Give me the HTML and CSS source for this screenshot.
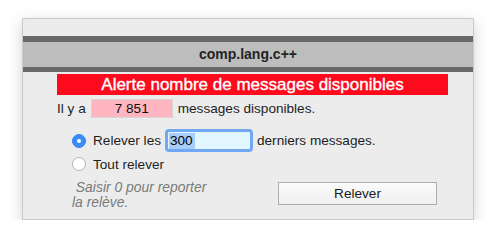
FILE: index.html
```html
<!DOCTYPE html>
<html lang="fr">
<head>
<meta charset="utf-8">
<link rel="stylesheet" href="styles.css">
</head>
<body>
<div class="window">
  <div class="titlebar"><div class="title">comp.lang.c++</div></div>
  <div class="alert">Alerte nombre de messages disponibles</div>
  <div class="count-row"><span>Il y a</span><span class="count">7 851</span><span>messages disponibles.</span></div>
  <div class="options">
    <div class="opt opt-first"><span class="radio on"></span><span>Relever les</span><span class="input"><span class="sel">300</span></span><span>derniers messages.</span></div>
    <div class="opt opt-second"><span class="radio"></span><span>Tout relever</span></div>
  </div>
  <div class="footer">
    <div class="hint">&nbsp;Saisir 0 pour reporter<br>la relève.</div>
    <button class="btn">Relever</button>
  </div>
</div>
</body>
</html>
```
FILE: styles.css
```css
* { box-sizing: border-box; }
html, body { margin: 0; padding: 0; background: #ffffff; }
body {
  font-family: "Liberation Sans", Arial, sans-serif;
  font-size: 13.6px;
  color: #1e1e1e;
  padding: 18px 0 0 22px;
}
.window {
  width: 452px;
  height: 202px;
  background: #ececec;
  border: 1px solid #c9c9c9;
  box-shadow: 0 4px 14px rgba(0,0,0,0.18);
  display: flex;
  flex-direction: column;
}
.titlebar { padding-top: 17px; }
.title {
  height: 36px;
  background: #bdbdbd;
  border-top: 6px solid #696969;
  border-bottom: 5px solid #696969;
  text-align: center;
  font-weight: bold;
  font-size: 14px;
  line-height: 25px;
  color: #232323;
}
.alert {
  margin: 2px 25px 0 34px;
  height: 21px;
  background: #fe0a1d;
  color: #ffffff;
  text-align: center;
  font-size: 17px;
  line-height: 22px;
  -webkit-text-stroke: 0.35px #ffffff;
}
.count-row {
  margin-top: 4px;
  padding-left: 34px;
  height: 19px;
  display: flex;
  align-items: center;
}
.count {
  width: 82px;
  height: 19px;
  margin: 0 5px 0 5px;
  background: #ffb6c1;
  border: 1px solid #d6d6d6;
  text-align: center;
  line-height: 17px;
  color: #111;
}
.options { margin-top: 11px; padding-left: 49px; }
.opt { display: flex; align-items: center; }
.opt-first { height: 23px; }
.opt-second { height: 18px; margin-top: 3px; }
.radio {
  width: 14px;
  height: 14px;
  border-radius: 50%;
  background: #ffffff;
  border: 1px solid #b4b4b4;
  margin-right: 7px;
  flex: none;
  position: relative;
}
.radio.on {
  background: #3b8cf7;
  border-color: #3583ee;
}
.radio.on::after {
  content: "";
  position: absolute;
  left: 4px;
  top: 4px;
  width: 4px;
  height: 4px;
  border-radius: 50%;
  background: #ffffff;
}
.input {
  width: 88px;
  height: 23px;
  margin: 0 4px 0 4px;
  background: #e1f6ff;
  border: 3px solid #72a7f1;
  border-radius: 4px;
  display: flex;
  align-items: center;
  padding-left: 1px;
}
.sel {
  background: #a9cdfa;
  line-height: 16px;
  padding: 0 1px 0 1px;
  width: 26px;
  color: #000;
}
.footer {
  margin-top: 4px;
  display: flex;
  align-items: flex-start;
}
.hint {
  padding-left: 49px;
  width: 255px;
  font-style: italic;
  font-size: 13.9px;
  color: #7a7a7a;
  line-height: 15px;
  padding-top: 3px;
}
.btn {
  margin-top: 5px;
  width: 159px;
  height: 23px;
  border: 1px solid #adadad;
  background: linear-gradient(#fafafa, #f0f0f0);
  font-family: "Liberation Sans", Arial, sans-serif;
  font-size: 13.6px;
  color: #1a1a1a;
  padding: 0;
}
```
